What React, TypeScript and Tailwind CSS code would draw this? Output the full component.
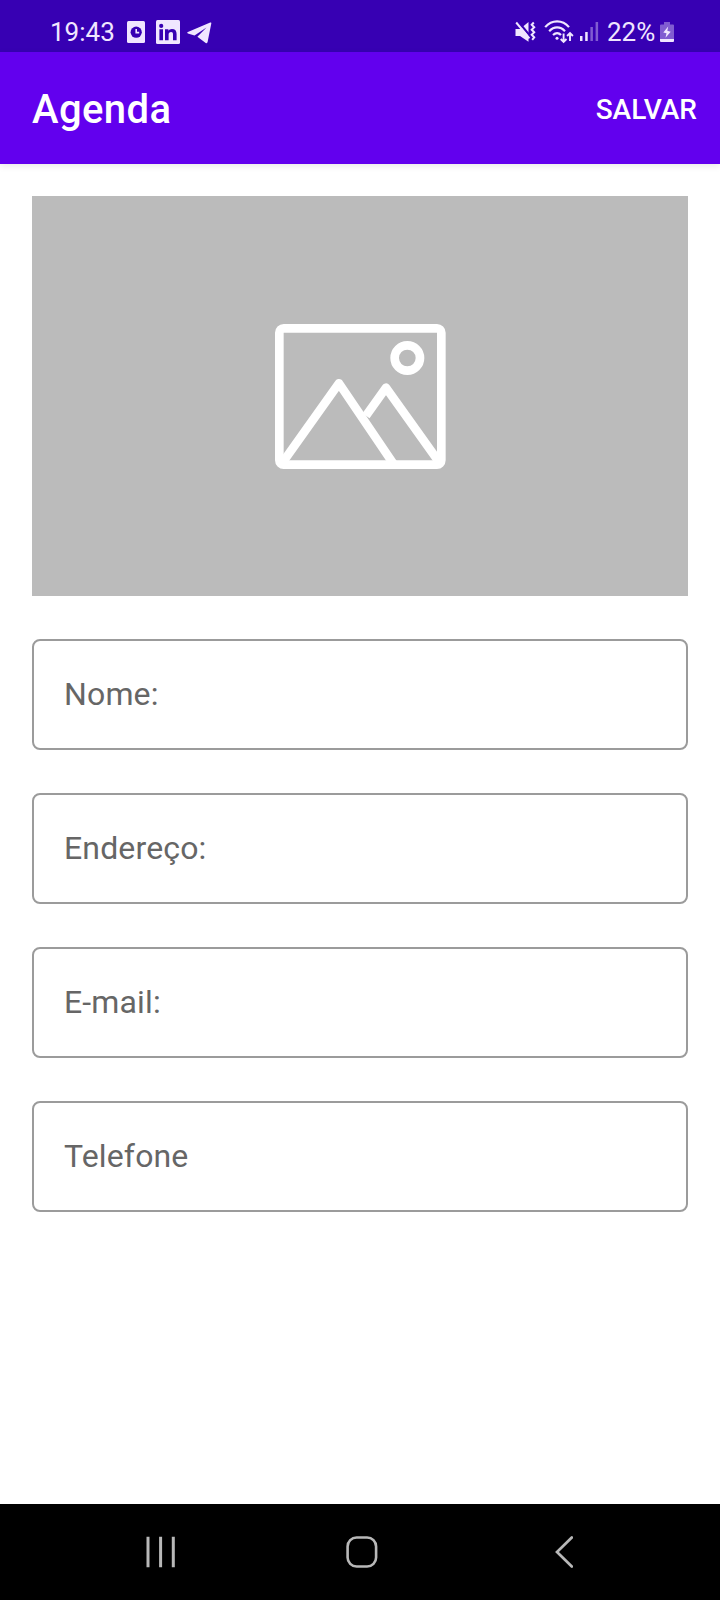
const fields = ["Nome:", "Endereço:", "E-mail:", "Telefone"];

function StatusBar() {
  return (
    <header className="flex h-[52px] shrink-0 items-start bg-[#3700b3] pl-[50px] text-[#f0e6ff]">
      <span className="mt-[17px] w-[65px] text-[26px] leading-[30px]">19:43</span>
      <svg className="mt-[21px] ml-3 h-[22px] w-[18px]" viewBox="0 0 18 22" fill="none">
        <rect width="18" height="22" rx="1.5" fill="currentColor" />
        <circle cx="9.2" cy="11.2" r="5.6" fill="#3700b3" />
        <path d="M9.2 8v3.6h3" stroke="currentColor" strokeWidth="1.6" />
      </svg>
      <svg className="mt-5 ml-[11px] h-[24px] w-[24px]" viewBox="0 0 24 24">
        <rect width="24" height="24" rx="1.5" fill="currentColor" />
        <g fill="#3700b3">
          <circle cx="5.2" cy="5.9" r="2.1" />
          <path d="M3.4 9.3h3.6v11H3.400zM9 9.300h3.400v1.500c.7-1.100 1.900-1.800 3.500-1.800 3.300 0 4.700 1.900 4.700 5v6.300H17v-5.800c0-1.600-.6-2.400-1.900-2.400-1.600 0-2.500 1-2.500 2.500v5.700H9z" />
        </g>
      </svg>
      <svg className="mt-[22px] ml-[7px] h-[22px] w-[25px]" viewBox="0 0 25 22" fill="currentColor">
        <path d="M23.200.6.9 10.100c-.9.4-.8 1.100 0 1.400l6.600 2.100L19.500 5.600 10.400 14.800l8.300 6.200c.9.5 1.700.2 1.900-.9L24.300 1.600c.2-.9-.3-1.300-1.100-1z" />
      </svg>

      <svg className="mt-[21px] ml-[303px] h-[22px] w-[21px]" viewBox="0 0 21 22" fill="none">
        <path d="M.5 8H5l8.500-7v19.800L5 15H.5z" fill="currentColor" />
        <path d="M2.900.2 16 16" stroke="#3700b3" strokeWidth="2.200" />
        <path d="M1.200 1.500 14.400 17.400" stroke="currentColor" strokeWidth="2" />
        <path d="m18.800 1.500-2.100 2.300 2.500 2.500-2.500 2.500 2.500 2.500-2.500 2.500 2.500 2.500-2 2.500" stroke="currentColor" strokeWidth="2" />
      </svg>
      <svg className="mt-5 ml-2 h-6 w-[30px]" viewBox="0 0 30 24" fill="none" stroke="currentColor" strokeWidth="2.2">
        <path d="M1.200 7.100C7.800-.5 18.400-.5 25 7.100" />
        <path d="M5.200 11.200c4.700-5 11.100-5 15.800 0" />
        <path d="M9 15c2.800-2.600 5.600-2.600 8 0" />
        <circle cx="13" cy="18.200" r="1.500" fill="currentColor" stroke="none" />
        <path d="M19.600 13.500v8.500M16.700 19l2.900 3 2.900-3M26 21v-8M23.100 16l2.900-3 2.900 3" strokeWidth="1.900" />
      </svg>
      <svg className="mt-[22px] ml-[6px] h-[19px] w-[19px]" viewBox="0 0 19 19" fill="currentColor">
        <rect y="14" width="2.500" height="5" />
        <rect x="5.200" y="10" width="2.500" height="9" />
        <rect x="10.400" y="5" width="2.500" height="14" opacity=".4" />
        <rect x="15.600" width="2.500" height="19" opacity=".4" />
      </svg>
      <span className="mt-[17px] ml-[8px] w-[50px] text-[26px] leading-[30px]">22%</span>
      <svg className="mt-[21px] ml-[3px] h-[22px] w-[14px]" viewBox="0 0 14 22" fill="currentColor">
        <path d="M4 1h6v2.500h3a1 1 0 0 1 1 1V18H0V4.500a1 1 0 0 1 1-1h3z" opacity=".4" />
        <path d="M0 18h14v2a1 1 0 0 1-1 1H1a1 1 0 0 1-1-1z" />
        <path d="M8.200 5.600 3.300 11.500l3.200.8-1 4.400 5.200-6-3.400-.9z" />
      </svg>
    </header>
  );
}

function ImagePlaceholder() {
  return (
    <div className="flex h-[400px] items-center justify-center bg-[#bbbbbb] pt-px">
      <svg
        className="h-[145.33px] w-[170.67px] overflow-visible"
        viewBox="44 40 512 436"
        fill="none"
        stroke="#fff"
        strokeWidth="26"
        strokeLinejoin="round"
      >
        <rect x="57" y="53" width="486" height="409" rx="13" />
        <circle cx="441" cy="142" r="38" />
        <path d="M62 462 236 218l165 244" />
        <path d="m317 315 60-84 165 231" />
      </svg>
    </div>
  );
}

function NavigationBar() {
  return (
    <nav className="flex h-24 shrink-0 items-start bg-black pt-8 text-[#b8b8b8]">
      <svg className="ml-[145px] h-8 w-[32px]" viewBox="0 0 32 32" stroke="currentColor" strokeWidth="3" fill="none">
        <path d="M3 .8v30.400M15.600 .8v30.400M28.300 .8v30.400" />
      </svg>
      <svg className="ml-[169px] h-8 w-8" viewBox="0 0 32 32" fill="none" stroke="currentColor" strokeWidth="2.6">
        <rect x="1.600" y="1.500" width="28.500" height="29" rx="9" />
      </svg>
      <svg className="ml-[175px] h-8 w-5" viewBox="0 0 20 32" fill="none" stroke="currentColor" strokeWidth="2.700" strokeLinecap="round">
        <path d="M18.800 1.500 4 16l14.800 14.500" />
      </svg>
    </nav>
  );
}

export default function App() {
  return (
    <div className="flex h-[1600px] w-[720px] flex-col overflow-hidden bg-white font-['Roboto',sans-serif]">
      <StatusBar />
      <div className="z-10 flex h-28 shrink-0 items-center justify-between bg-[#6200ee] pr-[23px] pl-8 text-white shadow-[0_2px_7px_rgba(0,0,0,0.09)]">
        <h1 className="pt-[3px] text-[40px] leading-[48px] font-medium tracking-[0.4px]">Agenda</h1>
        <button className="pt-[3px] text-[28px] leading-8 font-medium">SALVAR</button>
      </div>
      <main className="flex grow flex-col px-8 pt-8">
        <ImagePlaceholder />
        <form className="mt-[43px] flex flex-col gap-[43px]">
          {fields.map((label) => (
            <label
              key={label}
              className="flex h-[111px] items-center rounded-[8px] border-2 border-[#9b9b9b] px-[30px] pb-[2px] text-[32px] leading-[38px] tracking-[0.15px] text-[#666666]"
            >
              {label}
            </label>
          ))}
        </form>
      </main>
      <NavigationBar />
    </div>
  );
}
